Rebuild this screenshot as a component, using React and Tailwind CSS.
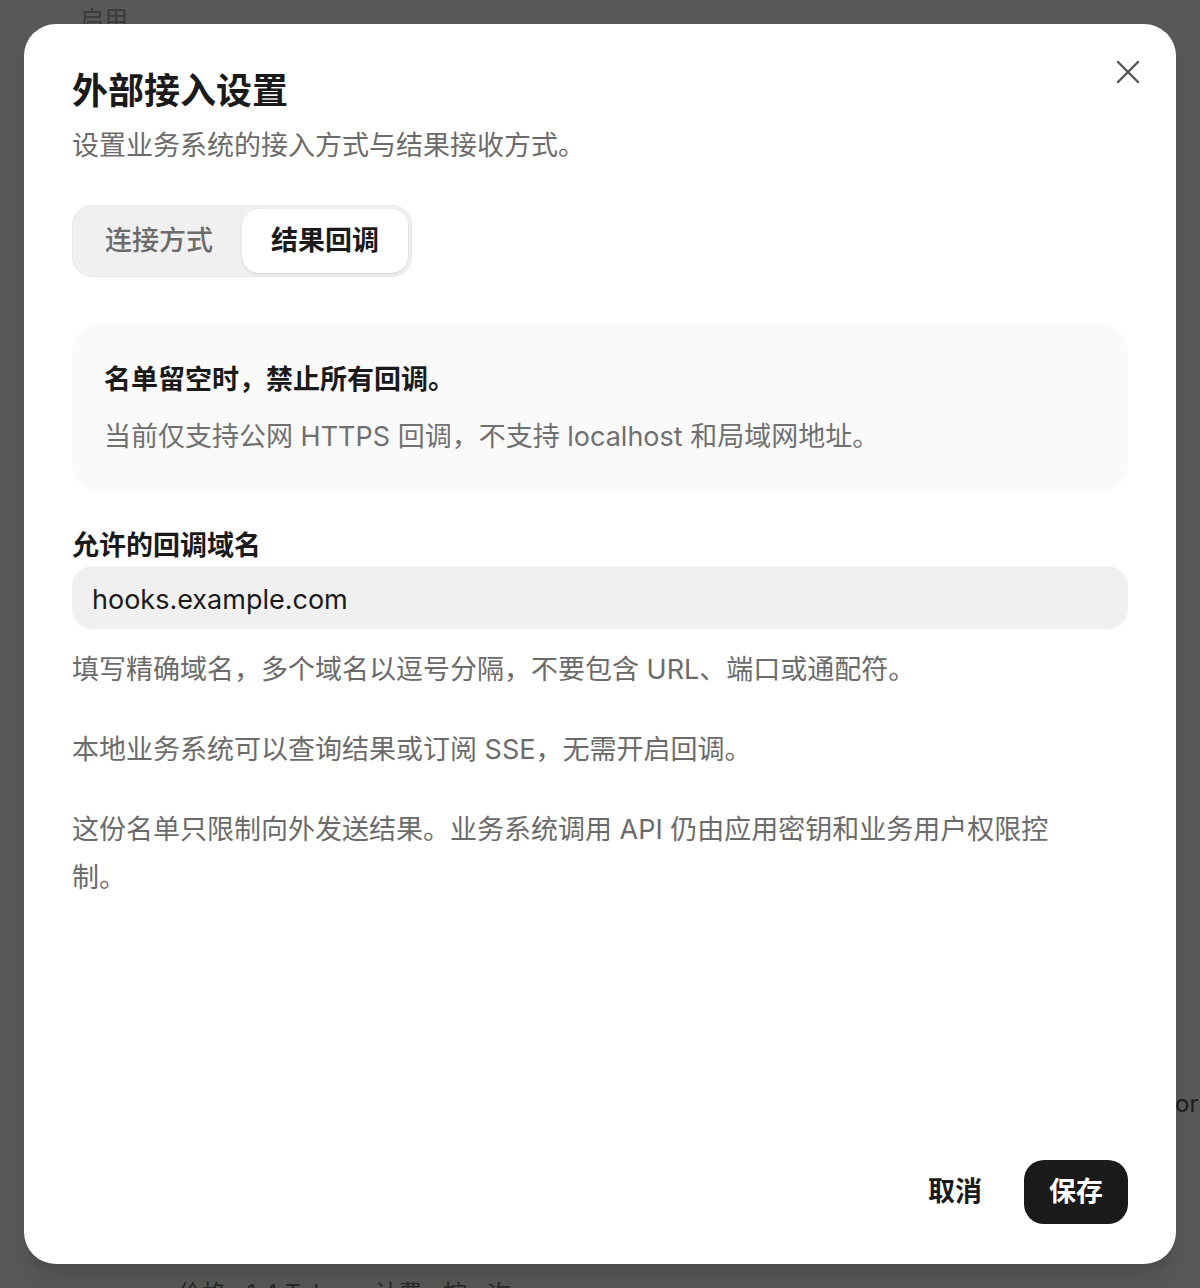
import React, { useState } from "react";

const font = { fontFamily: '"Inter", "Noto Sans CJK SC", sans-serif' };

const CloseIcon = () => (
  <svg width="24" height="24" viewBox="0 0 24 24" fill="none">
    <path d="M2 2L22 22M22 2L2 22" stroke="#555" strokeWidth="2.4" strokeLinecap="round" />
  </svg>
);

const ExternalAccessDialog = () => {
  const [tab, setTab] = useState("callback");
  const [domains, setDomains] = useState("hooks.example.com");

  return (
    <div className="relative h-[1288px] w-full overflow-hidden bg-[#585858]" style={font}>
      {/* page content behind the overlay */}
      <div className="absolute left-[80px] top-[4px] text-[24px] leading-[32px] text-[#3b3b3b]">启用</div>
      <div className="absolute left-[1175px] top-[1088px] text-[24px] leading-[32px] text-[#1c1c1c]">or</div>
      <div className="absolute left-[178px] top-[1278px] text-[24px] leading-[32px] text-[#2a2a2a]">
        价格 · 1.4 Token · 计费 · 按 · 次
      </div>

      <div className="relative p-6">
        <div className="flex h-[1240px] flex-col rounded-[32px] bg-white px-12 pb-10 pt-[45px] shadow-xl">
          <div className="flex items-start justify-between">
            <div>
              <h1 className="text-[36px] font-bold leading-[44px] text-[#1a1a1a]">外部接入设置</h1>
              <p className="mt-[15px] text-[27px] leading-[36px] text-[#6b6b6b]">
                设置业务系统的接入方式与结果接收方式。
              </p>
            </div>
            <button className="mr-[-20px] mt-[-17px] p-2">
              <CloseIcon />
            </button>
          </div>

          <div className="mt-[41px] flex w-[340px] rounded-[20px] border border-[#e9e9e9] bg-[#f0f0f0] p-[3px]">
            <button
              onClick={() => setTab("connect")}
              className={
                tab === "connect"
                  ? "h-[64px] flex-1 rounded-[17px] bg-white text-[27px] font-semibold text-[#1a1a1a] shadow-sm"
                  : "h-[64px] flex-1 rounded-[17px] text-[27px] font-medium text-[#6b6b6b]"
              }
            >
              连接方式
            </button>
            <button
              onClick={() => setTab("callback")}
              className={
                tab === "callback"
                  ? "h-[64px] flex-1 rounded-[17px] bg-white text-[27px] font-semibold text-[#1a1a1a] shadow-sm"
                  : "h-[64px] flex-1 rounded-[17px] text-[27px] font-medium text-[#6b6b6b]"
              }
            >
              结果回调
            </button>
          </div>

          <div className="mt-[47px] rounded-[28px] bg-[#fafafa] px-8 pb-[34px] pt-[36px]">
            <p className="text-[27px] font-semibold leading-[40px] text-[#1a1a1a]">名单留空时，禁止所有回调。</p>
            <p className="mt-[17px] text-[27px] leading-[40px] text-[#707070]">
              当前仅支持公网 HTTPS 回调，不支持 localhost 和局域网地址。
            </p>
          </div>

          <label className="mt-[39px] block text-[27px] font-semibold leading-[32px] text-[#1a1a1a]">
            允许的回调域名
          </label>
          <input
            className="mt-1 h-[63px] w-full rounded-[20px] bg-[#f0f0f0] px-5 pt-[3px] text-[27px] text-[#1a1a1a] outline-none"
            value={domains}
            onChange={(e) => setDomains(e.target.value)}
          />

          <div className="mt-[17px] flex flex-col gap-8 text-[27px] leading-[48px] text-[#6b6b6b]">
            <p>填写精确域名，多个域名以逗号分隔，不要包含 URL、端口或通配符。</p>
            <p>本地业务系统可以查询结果或订阅 SSE，无需开启回调。</p>
            <p>
              这份名单只限制向外发送结果。业务系统调用 API 仍由应用密钥和业务用户权限控
              <br />
              制。
            </p>
          </div>

          <div className="mt-auto flex items-center justify-end gap-[18px]">
            <button className="h-[64px] px-6 text-[27px] font-semibold text-[#1a1a1a]">取消</button>
            <button className="h-[64px] w-[104px] rounded-[20px] bg-[#1a1a1a] text-[27px] font-semibold text-white">
              保存
            </button>
          </div>
        </div>
      </div>
    </div>
  );
};

export default function App() {
  return <ExternalAccessDialog />;
}
